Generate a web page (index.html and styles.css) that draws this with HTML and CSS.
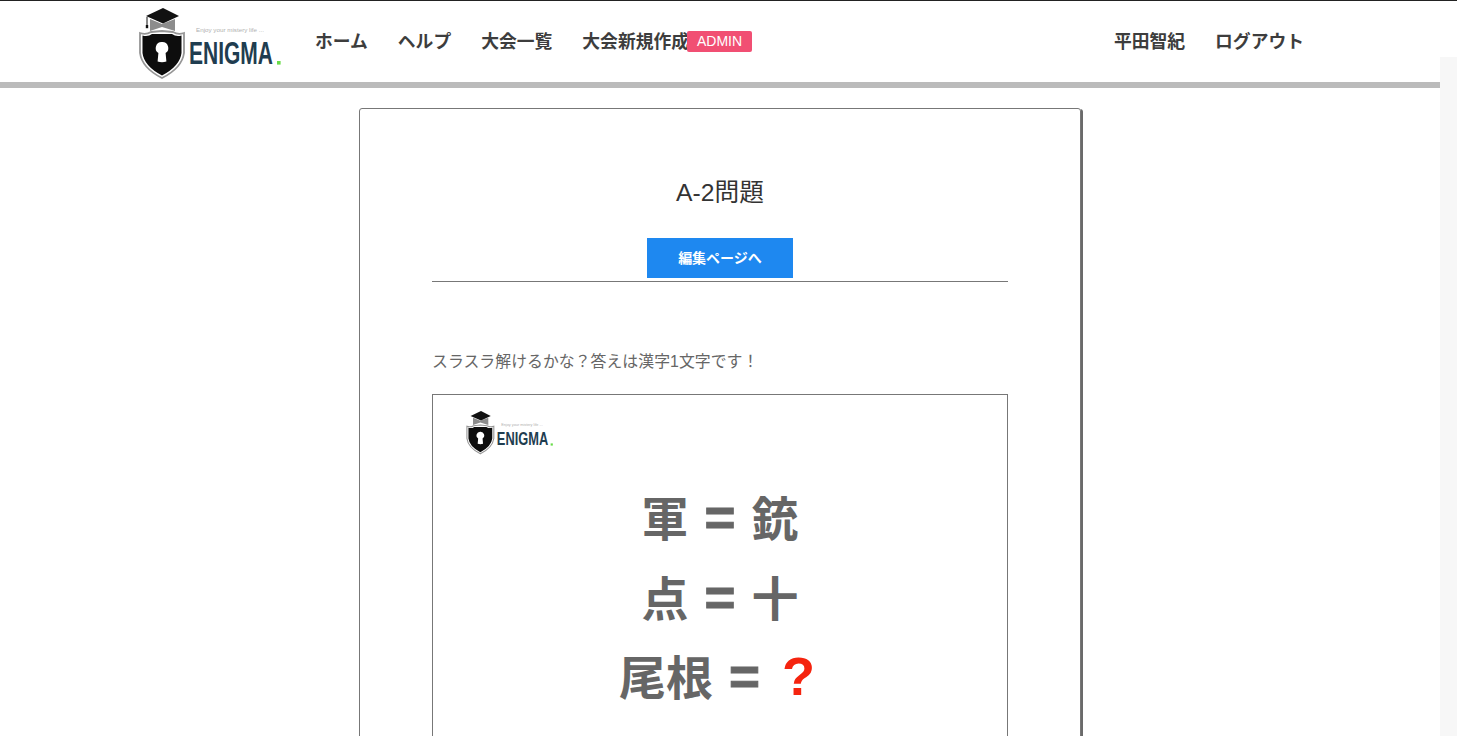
FILE: index.html
```html
<!DOCTYPE html>
<html lang="ja">
<head>
<meta charset="utf-8">
<title>A-2問題</title>
<link rel="stylesheet" href="styles.css">
</head>
<body>
<header class="site-header">
  <a class="brand" href="#" aria-label="ENIGMA">
    <svg class="brand-logo" viewBox="0 0 143 72">
      <path d="M1 25 Q7 27 12 24 L23 23 L34 24 Q39 27 45 25 L45 45 Q43 60 23 70 Q3 60 1 45Z" fill="#fff" stroke="#969696" stroke-width="1.8"/>
      <path d="M3.5 27.5 Q9 29 13 26 L23 26 L33 26 Q37 29 42.5 27.5 L42.5 45 Q41 58 23 67.5 Q5 58 3.5 45Z" fill="#0d0d0d"/>
      <path d="M11 11 L23 16 L36 11 L36 23 L23 19 L11 23Z" fill="#8c8c8c"/>
      <path d="M24 0 L40 8 L24 15.5 L7 8Z" fill="#111"/>
      <path d="M8 9 L8 17" stroke="#111" stroke-width="1"/>
      <rect x="6.8" y="17" width="2.4" height="3.2" fill="#111"/>
      <path d="M23 34 A6 6 0 0 1 26.6 45 L27.4 53.5 Q23 55 18.6 53.5 L19.4 45 A6 6 0 0 1 23 34Z" fill="#fff"/>
      <text class="logo-tag" x="57" y="24" textLength="68" lengthAdjust="spacingAndGlyphs">Enjoy your mistery life ...</text>
      <text class="logo-word" x="50" y="55.5" textLength="84" lengthAdjust="spacingAndGlyphs">ENIGMA</text>
      <rect x="138" y="53" width="3.6" height="3.6" fill="#69dc4a"/>
    </svg>
  </a>
  <nav class="nav-main">
    <a class="nav-link" href="#">ホーム</a>
    <a class="nav-link" href="#">ヘルプ</a>
    <a class="nav-link" href="#">大会一覧</a>
    <span class="nav-with-badge"><a class="nav-link" href="#">大会新規作成</a><span class="badge">ADMIN</span></span>
  </nav>
  <nav class="nav-user">
    <a class="nav-link" href="#">平田智紀</a>
    <a class="nav-link" href="#">ログアウト</a>
  </nav>
</header>

<main class="page">
  <article class="card">
    <h1 class="card-title">A-2問題</h1>
    <div class="card-action"><a class="btn" href="#">編集ページへ</a></div>
    <hr class="rule">
    <p class="lead">スラスラ解けるかな？答えは漢字1文字です！</p>
    <figure class="puzzle">
      <svg class="puzzle-logo" viewBox="0 0 143 72">
        <path d="M1 25 Q7 27 12 24 L23 23 L34 24 Q39 27 45 25 L45 45 Q43 60 23 70 Q3 60 1 45Z" fill="#fff" stroke="#969696" stroke-width="1.8"/>
        <path d="M3.5 27.5 Q9 29 13 26 L23 26 L33 26 Q37 29 42.5 27.5 L42.5 45 Q41 58 23 67.5 Q5 58 3.5 45Z" fill="#0d0d0d"/>
        <path d="M11 11 L23 16 L36 11 L36 23 L23 19 L11 23Z" fill="#8c8c8c"/>
        <path d="M24 0 L40 8 L24 15.5 L7 8Z" fill="#111"/>
        <path d="M23 34 A6 6 0 0 1 26.6 45 L27.4 53.5 Q23 55 18.6 53.5 L19.4 45 A6 6 0 0 1 23 34Z" fill="#fff"/>
        <text class="logo-tag" x="57" y="24" textLength="68" lengthAdjust="spacingAndGlyphs">Enjoy your mistery life ...</text>
        <text class="logo-word" x="50" y="55.5" textLength="84" lengthAdjust="spacingAndGlyphs">ENIGMA</text>
        <rect x="138" y="53" width="3.6" height="3.6" fill="#69dc4a"/>
      </svg>
      <div class="puzzle-lines">
        <p class="puzzle-line">軍 <span class="eq">=</span> 銃</p>
        <p class="puzzle-line">点 <span class="eq">=</span> 十</p>
        <p class="puzzle-line">尾根 <span class="eq">=</span> <span class="qmark">?</span></p>
      </div>
    </figure>
  </article>
</main>
<div class="scroll-track"></div>
</body>
</html>
```
FILE: styles.css
```css
* { box-sizing: border-box; }
html, body { margin: 0; height: 100%; overflow: hidden; }
body {
  border-top: 1px solid #222;
  background: #fff;
  color: #333;
  font-family: "Liberation Sans", "Noto Sans CJK JP", sans-serif;
  position: relative;
}
a { text-decoration: none; color: inherit; }

.site-header {
  width: 1440px;
  height: 87px;
  border-bottom: 6px solid #bbb;
  padding: 0 136px 0 139px;
  display: flex;
  align-items: center;
}
.brand { display: block; width: 143px; height: 72px; margin-top: 4px; }
.brand-logo { display: block; width: 143px; height: 72px; overflow: visible; }
.logo-tag { font-family: "Liberation Sans", sans-serif; font-size: 5.5px; fill: #b0b0b0; }
.logo-word { font-family: "Liberation Sans Narrow", "Liberation Sans", sans-serif; font-weight: 700; font-size: 31px; fill: #1f3d50; }

.nav-main { display: flex; gap: 30px; margin-left: 33px; align-items: center; }
.nav-user { display: flex; gap: 30px; margin-left: auto; align-items: center; }
.nav-link { font-size: 17.8px; font-weight: 700; color: #3d3d3d; line-height: 24px; }
.nav-with-badge { display: flex; align-items: center; }
.badge {
  width: 65px;
  height: 21px;
  margin: -1px 0 0 -2px;
  border-radius: 2px;
  background: #f14f73;
  color: #fff;
  font-size: 14px;
  line-height: 21px;
  text-align: center;
}

.page { width: 1440px; padding-top: 20px; }
.card {
  width: 722px;
  margin: 0 auto;
  height: 700px;
  padding: 0 72px;
  border: 1px solid #777;
  border-radius: 3px;
  box-shadow: 2px 1px 0 #6a6a6a;
}
.card-title {
  margin: 0;
  padding-top: 68px;
  font-size: 24.7px;
  font-weight: 400;
  line-height: 32px;
  text-align: center;
  color: #333;
}
.card-action { display: flex; justify-content: center; margin-top: 29px; }
.btn {
  width: 146px;
  height: 40px;
  background: #1e88f0;
  color: #fff;
  font-size: 14px;
  font-weight: 700;
  line-height: 40px;
  text-align: center;
}
.rule { margin: 3px 0 0; border: 0; border-top: 1px solid #777; }
.lead { margin: 68px 0 0; font-size: 15.9px; line-height: 24px; color: #666; }
.puzzle {
  margin: 20px 0 0;
  height: 400px;
  border: 1px solid #777;
  padding: 16px 0 0 33px;
}
.puzzle-logo { display: block; width: 88px; height: 44px; overflow: visible; }
.puzzle-lines { margin: 23px 0 0 -33px; }
.puzzle-line {
  margin: 0;
  height: 79.5px;
  font-size: 47px;
  line-height: 79.5px;
  font-weight: 700;
  text-align: center;
  color: #666;
  word-spacing: 3px;
}
.eq { font-size: 53px; -webkit-text-stroke: 1px #666; }
.qmark { color: #f5240f; font-size: 54px; line-height: 0; margin: 0 6px; }

.scroll-track {
  position: absolute;
  top: 56px;
  right: 0;
  bottom: 0;
  width: 17px;
  background: #f7f7f7;
}
```
